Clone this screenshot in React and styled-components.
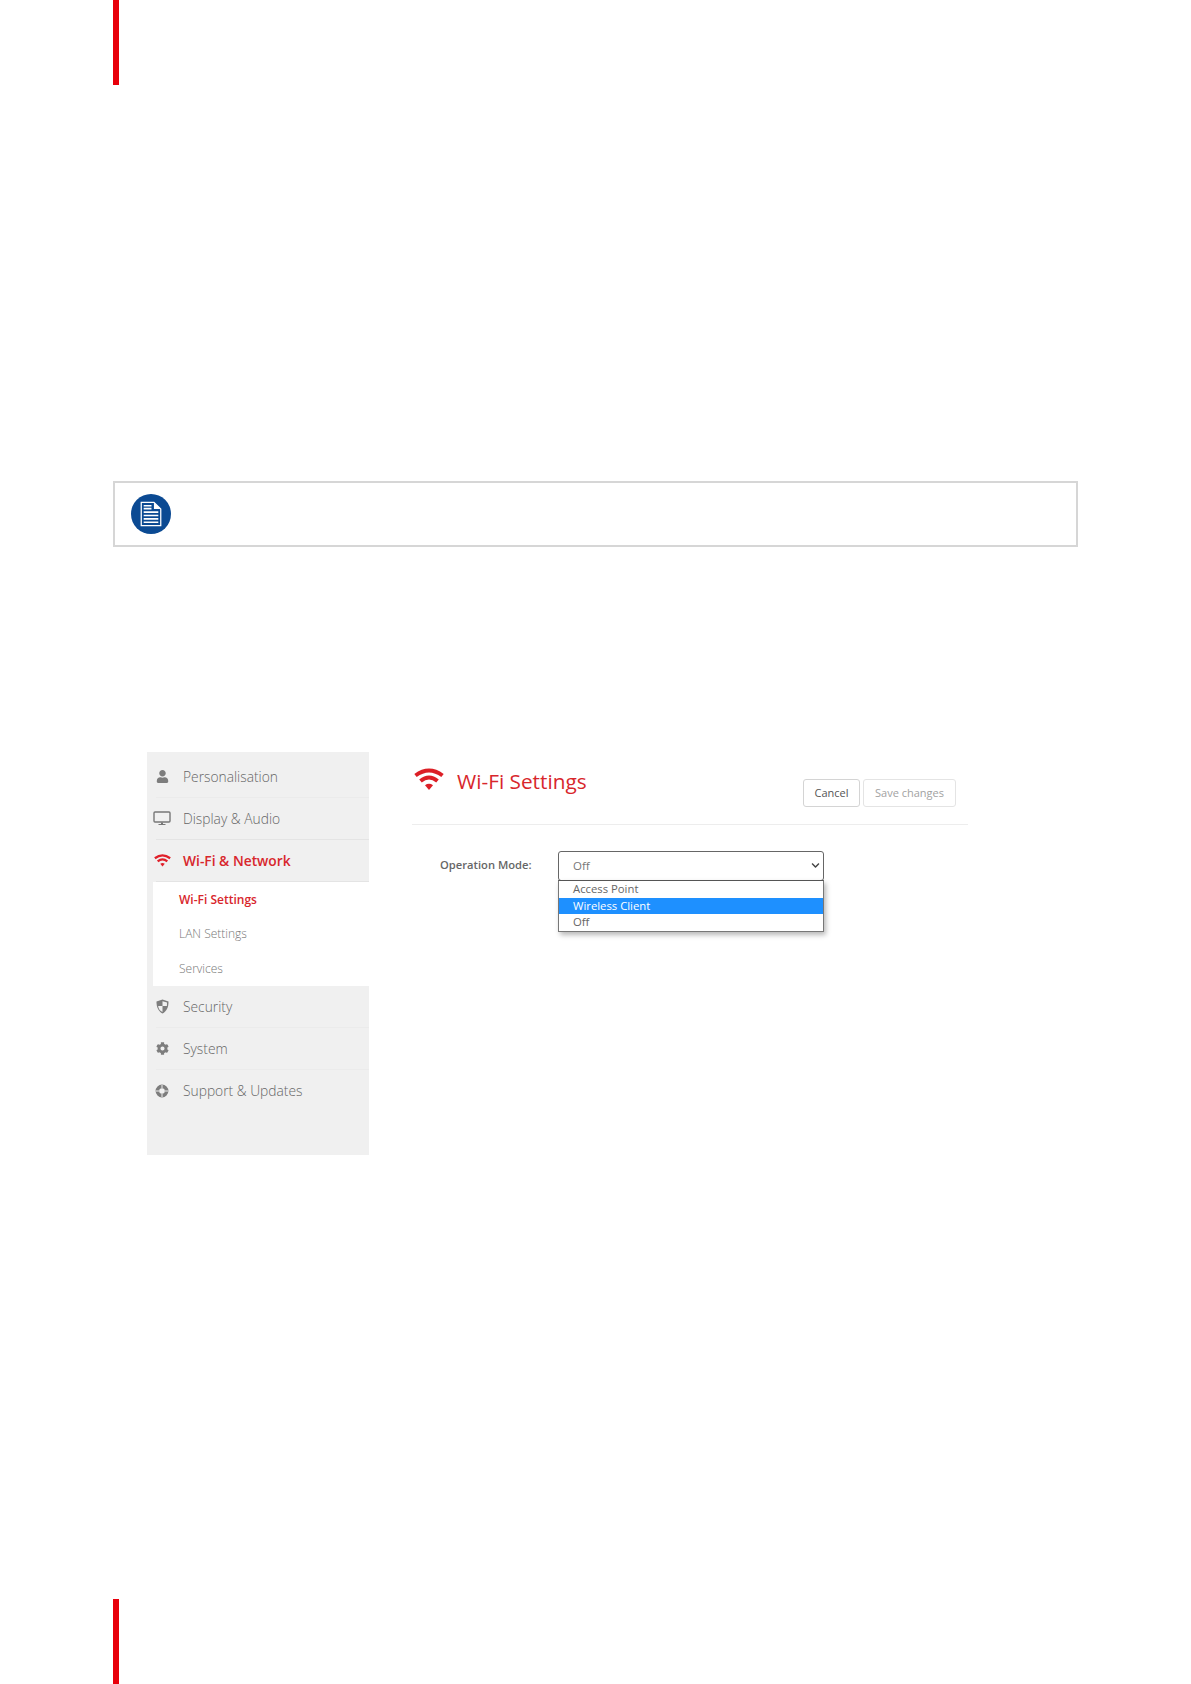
import React from 'react'
import styled, { createGlobalStyle } from 'styled-components'
import { FaUser, FaCog, FaChevronDown } from 'react-icons/fa'

const GlobalStyle = createGlobalStyle`
  html, body {
    margin: 0;
    padding: 0;
    background: #fff;
    font-family: "Open Sans", "Liberation Sans", sans-serif;
  }
`

const red = '#d8262c'

const Page = styled.div`
  width: 1191px;
  height: 1684px;
  display: flex;
  flex-direction: column;
  overflow: hidden;
`

const EdgeBar = styled.div`
  flex: none;
  width: 6px;
  height: 85px;
  margin-left: 113px;
  margin-top: ${props => (props.bottom ? 'auto' : '0')};
  background: #e8000b;
`

const Note = styled.div`
  flex: none;
  box-sizing: border-box;
  width: 965px;
  height: 66px;
  margin: 396px 0 0 113px;
  padding: 11px 0 0 16px;
  border: 2px solid #d6d6d6;
`

const Figure = styled.div`
  flex: none;
  display: flex;
  margin: 205px 0 0 147px;
  height: 403px;
`

const Sidebar = styled.nav`
  flex: none;
  box-sizing: border-box;
  width: 222px;
  padding-top: 4px;
  background: #f0f0f0;
`

const Row = styled.div`
  box-sizing: border-box;
  height: 42px;
  margin-left: 9px;
  padding-left: 27px;
  display: flex;
  align-items: center;
  position: relative;
  border-bottom: 1px solid ${props => (props.noLine ? 'transparent' : props.strong ? '#e4e4e4' : '#ebebeb')};
  color: ${props => (props.active ? red : '#666')};
  font-size: 13.8px;
  font-weight: ${props => (props.active ? 600 : 300)};
`

const RowIcon = styled.span`
  position: absolute;
  left: -3px;
  top: 0;
  bottom: 0;
  width: 18px;
  display: flex;
  align-items: center;
  justify-content: center;
  color: ${props => (props.active ? '#e0202a' : '#7d7d7d')};
  font-size: 13px;
`

const SubPanel = styled.div`
  box-sizing: border-box;
  height: 104px;
  margin-left: 6px;
  padding-left: 26px;
  background: #fff;
  display: flex;
  flex-direction: column;
`

const SubItem = styled.div`
  height: 34.6px;
  display: flex;
  align-items: center;
  color: ${props => (props.active ? red : '#777')};
  font-size: 12px;
  font-weight: ${props => (props.active ? 600 : 300)};
`

const Main = styled.section`
  flex: none;
  box-sizing: border-box;
  width: 556px;
  margin-left: 43px;
`

const Header = styled.header`
  box-sizing: border-box;
  height: 73px;
  padding: 14px 12px 0 2px;
  display: flex;
  align-items: flex-start;
  border-bottom: 1px solid #ededed;
`

const TitleIcon = styled.span`
  display: flex;
  margin-top: 2px;
`

const Title = styled.h1`
  margin: -1px 0 0 13px;
  font-size: 20.8px;
  line-height: 32px;
  font-weight: 400;
  color: ${red};
`

const Buttons = styled.div`
  margin-left: auto;
  margin-top: 13px;
  display: flex;
  gap: 3px;
`

const Button = styled.button`
  box-sizing: border-box;
  height: 28px;
  width: ${props => props.w}px;
  padding: 0 0 1px;
  border: 1px solid ${props => (props.disabled ? '#e4e4e4' : '#d4d4d4')};
  border-radius: 3px;
  background: #fff;
  color: ${props => (props.disabled ? '#a2a2a2' : '#555')};
  font-family: inherit;
  font-size: 11px;
`

const FormRow = styled.div`
  display: flex;
  align-items: center;
  margin-top: 26px;
  padding-left: 28px;
`

const Label = styled.label`
  width: 118px;
  margin-bottom: 3px;
  color: #666;
  font-size: 11.2px;
  font-weight: 600;
`

const SelectBox = styled.div`
  box-sizing: border-box;
  width: 266px;
  height: 30px;
  padding: 0 3px 1px 14px;
  position: relative;
  display: flex;
  align-items: center;
  justify-content: space-between;
  border: 1px solid #666;
  border-radius: 3px;
  color: #777;
  font-size: 11.5px;
`

const Options = styled.ul`
  box-sizing: border-box;
  position: absolute;
  left: -1px;
  right: -1px;
  top: 28px;
  margin: 0;
  padding: 0;
  list-style: none;
  background: #fff;
  border: 1px solid #777;
  border-top-color: #555;
  box-shadow: 2px 3px 5px rgba(0, 0, 0, 0.28);
`

const Option = styled.li`
  height: 16.5px;
  line-height: 16px;
  padding-left: 14px;
  background: ${props => (props.selected ? '#1e90ff' : 'transparent')};
  color: ${props => (props.selected ? '#fff' : '#666')};
  font-size: 11.3px;
`

const NoteIcon = () => (
  <svg width="40" height="40" viewBox="0 0 41 41">
    <circle cx="20.5" cy="20.5" r="20.5" fill="#0b4a93" />
    <path d="M10.5 8.5h13l7 7v17h-20z" fill="none" stroke="#fff" strokeWidth="1.3" />
    <path d="M23.5 8.5v7h7z" fill="#fff" />
    <path
      d="M13 12h8M13 15h8M13 18.5h15M13 22h15M13 25.5h15M13 29h15"
      stroke="#fff"
      strokeWidth="1.7"
    />
  </svg>
)

const MonitorIcon = () => (
  <svg width="18" height="15" viewBox="0 0 18 15">
    <rect x="1" y="1" width="16" height="10" rx="1" fill="none" stroke="#777" strokeWidth="1.4" />
    <path d="M8 11.5h2V13h2.5v1h-7v-1H8z" fill="#777" />
  </svg>
)

const WifiIcon = ({ width, color }) => (
  <svg width={width} viewBox="0 0 30 23" style={{ display: 'block' }}>
    <g fill="none" stroke={color} strokeWidth="4">
      <path d="M1.5 7.5Q15 -2.5 28.5 7.5" />
      <path d="M6.5 13Q15 6 23.5 13" />
    </g>
    <path d="M11 17.2Q15 14.4 19 17.2L15 22z" fill={color} />
  </svg>
)

const ShieldIcon = () => (
  <svg width="13" height="15" viewBox="0 0 13 15">
    <path d="M6.5 .5L12.5 2.5C12.7 8 10.5 12.5 6.5 14.5C2.5 12.5 .3 8 .5 2.5z" fill="#7d7d7d" />
    <path d="M6.5 2.2L11 3.6L10.9 7H6.5z" fill="#f0f0f0" />
    <path d="M6.5 7H2.1C2.5 9.8 4 12 6.5 13.1z" fill="#f0f0f0" />
  </svg>
)

const SupportIcon = () => (
  <svg width="14" height="14" viewBox="0 0 14 14">
    <circle cx="7" cy="7" r="4.6" fill="none" stroke="#7d7d7d" strokeWidth="3.6" />
    <path d="M1 7h3.2M9.8 7H13M7 1v3.2M7 9.8V13" stroke="#f0f0f0" strokeWidth="1" />
  </svg>
)

export default function App() {
  return (
    <Page>
      <GlobalStyle />
      <EdgeBar />
      <Note>
        <NoteIcon />
      </Note>
      <Figure>
        <Sidebar>
          <Row>
            <RowIcon><FaUser /></RowIcon>
            Personalisation
          </Row>
          <Row strong>
            <RowIcon><MonitorIcon /></RowIcon>
            Display &amp; Audio
          </Row>
          <Row active strong>
            <RowIcon active><WifiIcon width={17} color="#e0202a" /></RowIcon>
            Wi-Fi &amp; Network
          </Row>
          <SubPanel>
            <SubItem active>Wi-Fi Settings</SubItem>
            <SubItem>LAN Settings</SubItem>
            <SubItem>Services</SubItem>
          </SubPanel>
          <Row>
            <RowIcon><ShieldIcon /></RowIcon>
            Security
          </Row>
          <Row>
            <RowIcon><FaCog /></RowIcon>
            System
          </Row>
          <Row noLine>
            <RowIcon><SupportIcon /></RowIcon>
            Support &amp; Updates
          </Row>
        </Sidebar>
        <Main>
          <Header>
            <TitleIcon><WifiIcon width={30} color="#dc1f26" /></TitleIcon>
            <Title>Wi-Fi Settings</Title>
            <Buttons>
              <Button w={57}>Cancel</Button>
              <Button w={93} disabled>Save changes</Button>
            </Buttons>
          </Header>
          <FormRow>
            <Label>Operation Mode:</Label>
            <SelectBox>
              Off
              <FaChevronDown size={9} color="#444" />
              <Options>
                <Option>Access Point</Option>
                <Option selected>Wireless Client</Option>
                <Option>Off</Option>
              </Options>
            </SelectBox>
          </FormRow>
        </Main>
      </Figure>
      <EdgeBar bottom />
    </Page>
  )
}
